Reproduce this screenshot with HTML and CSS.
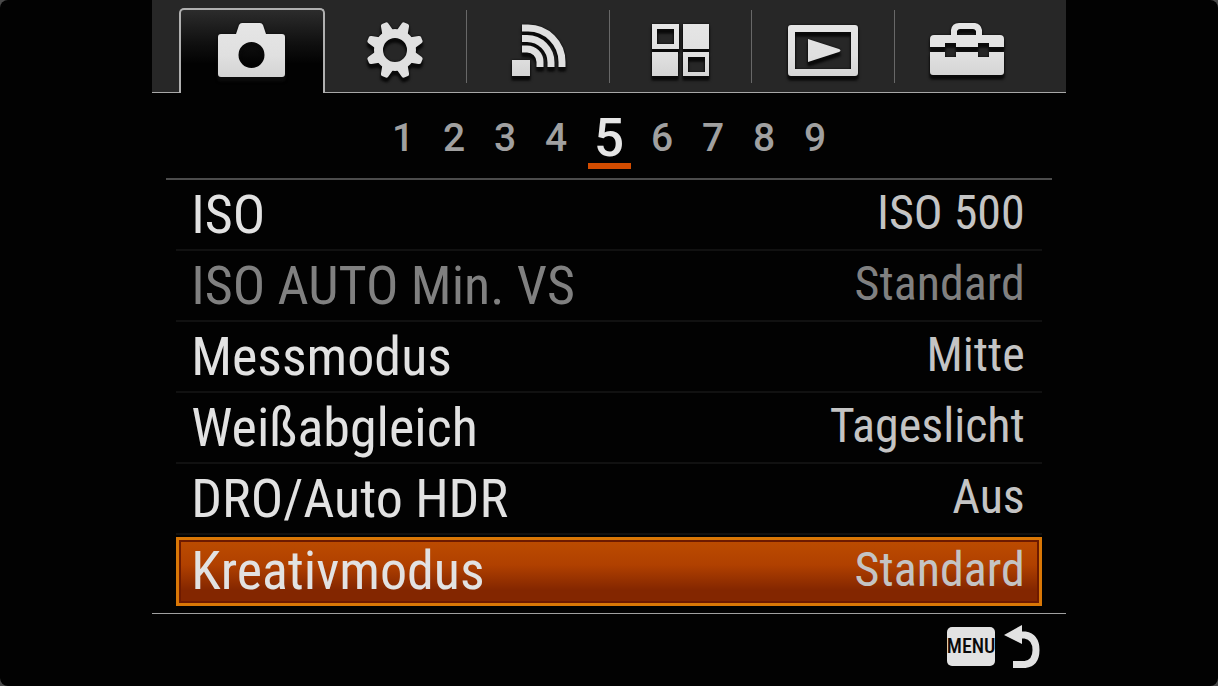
FILE: index.html
```html
<!DOCTYPE html>
<html lang="de">
<head>
  <meta charset="UTF-8">
  <meta name="viewport" content="width=device-width, initial-scale=1.0">
  <title>Kameramenü</title>
  <link rel="stylesheet" href="styles.css">
</head>
<body>
  <main class="screen">
    <nav class="tabs" aria-label="Menü">
      <button class="tab active" aria-label="Kamera">
        <svg class="icon" viewBox="0 0 80 62" fill="url(#metal)">
          <defs>
            <linearGradient id="metal" x1="0" y1="0" x2="0" y2="62" gradientUnits="userSpaceOnUse">
              <stop offset="0" stop-color="#e6e6e6"/>
              <stop offset="0.55" stop-color="#e0e0e0"/>
              <stop offset="1" stop-color="#d0d0d0"/>
            </linearGradient>
          </defs>
          <path fill-rule="evenodd" d="M9 13H24L27 4Q28 2 30 2H48Q50 2 51 4L54 13H70Q73 13 73 16V53Q73 56 70 56H9Q6 56 6 53V16Q6 13 9 13ZM39.500 21A13 13 0 1 0 39.500 47A13 13 0 1 0 39.500 21Z"/>
        </svg>
      </button>
      <button class="tab" aria-label="Benutzereinstellungen">
        <svg class="icon" viewBox="0 0 80 62" fill="#e0e0e0">
          <g transform="translate(40 29)">
            <circle r="16.500" fill="none" stroke="#e0e0e0" stroke-width="9"/>
            <path id="tooth" transform="rotate(22.500)" d="M-6 -18L-4 -27Q-3.500 -29 -2 -29H2Q3.500 -29 4 -27L6 -18Z"/>
            <use href="#tooth" transform="rotate(45)"/>
            <use href="#tooth" transform="rotate(90)"/>
            <use href="#tooth" transform="rotate(135)"/>
            <use href="#tooth" transform="rotate(180)"/>
            <use href="#tooth" transform="rotate(225)"/>
            <use href="#tooth" transform="rotate(270)"/>
            <use href="#tooth" transform="rotate(315)"/>
          </g>
        </svg>
      </button>
      <button class="tab" aria-label="Drahtlos">
        <svg class="icon" viewBox="0 0 80 62">
          <rect x="14" y="39" width="18" height="16" fill="url(#metal)"/>
          <path fill="none" stroke="#e0e0e0" stroke-width="7" d="M24 28H29A13 13 0 0 1 42 41V46M24 17.500H29A24 24 0 0 1 53 41.500V46M24 7H30A34 34 0 0 1 64 41V46"/>
        </svg>
      </button>
      <button class="tab" aria-label="Applikation">
        <svg class="icon" viewBox="0 0 80 62" fill="url(#metal)">
          <path fill-rule="evenodd" d="M12 3H39V28H12ZM17 8V23H34V8ZM43 3H69V28H43ZM12 31H38V55H12ZM43 31H69V55H43ZM48 36V51H65V36Z"/>
        </svg>
      </button>
      <button class="tab" aria-label="Wiedergabe">
        <svg class="icon" viewBox="0 0 80 62" fill="url(#metal)">
          <path fill-rule="evenodd" d="M8 4H72Q75 4 75 7V52Q75 55 72 55H8Q5 55 5 52V7Q5 4 8 4ZM12 11V48H68V11Z"/>
          <path d="M25 18L56 28Q59 29.500 56 31L25 41Z"/>
        </svg>
      </button>
      <button class="tab" aria-label="Setup">
        <svg class="icon" viewBox="0 0 80 62" fill="url(#metal)">
          <path fill-rule="evenodd" d="M8 14H25V9Q26 2 33 2H49Q55 3 56 9V14H74Q78 14 78 18V26H63V22H52V26H30V22H19V26H4V18Q4 14 8 14ZM31 14H50V10Q49 8 47 8H34Q32 8 31 10Z"/>
          <path d="M4 31H19V36H30V31H52V36H63V31H78V51Q78 54 75 54H7Q4 54 4 51Z"/>
        </svg>
      </button>
    </nav>

    <nav class="pages" aria-label="Seiten">
      <button class="page">1</button>
      <button class="page">2</button>
      <button class="page">3</button>
      <button class="page">4</button>
      <button class="page current" aria-current="page">5</button>
      <button class="page">6</button>
      <button class="page">7</button>
      <button class="page">8</button>
      <button class="page">9</button>
    </nav>

    <div class="list">
      <button class="row"><span class="name">ISO</span><span class="value">ISO 500</span></button>
      <button class="row" disabled><span class="name">ISO AUTO Min. VS</span><span class="value">Standard</span></button>
      <button class="row"><span class="name">Messmodus</span><span class="value">Mitte</span></button>
      <button class="row"><span class="name">Weißabgleich</span><span class="value">Tageslicht</span></button>
      <button class="row"><span class="name">DRO/Auto HDR</span><span class="value">Aus</span></button>
      <button class="row selected"><span class="name">Kreativmodus</span><span class="value">Standard</span></button>
    </div>

    <footer class="footer">
      <button class="menu">MENU</button>
      <button class="back" aria-label="Zurück">
        <svg class="back-icon" viewBox="0 0 36 44">
          <path fill="#e2e2e2" d="M0 10L18 0V19Z"/>
          <path fill="none" stroke="#e2e2e2" stroke-width="7" d="M16 10H21Q32 12 32 25Q32 38 21 39.500H9"/>
        </svg>
      </button>
    </footer>
  </main>
</body>
</html>
```
FILE: styles.css
```css
* {
  box-sizing: border-box;
}

html {
  background: #4a4a4a;
}

body {
  margin: 0;
  min-height: 100vh;
  border-radius: 8px;
  background: #020202;
  font-family: Roboto, "Liberation Sans", Arial, sans-serif;
  color: #e2e2e2;
}

button {
  margin: 0;
  padding: 0;
  border: 0;
  background: none;
  color: inherit;
  font: inherit;
}

.screen {
  width: 75%;
  margin: 0 auto;
}

/* top tabs */
.tabs {
  display: flex;
  height: 93px;
  padding: 8px 28px 0;
  background: #272727;
  border-bottom: 1px solid #a8a8a8;
}

.tab {
  flex: 1;
  height: 73px;
  margin-top: 2px;
  border-right: 1px solid #686868;
}

.tab:last-child {
  border-color: transparent;
}

.tab.active {
  height: 85px;
  margin: 0 -1px -1px;
  border: 2px solid #b0b0b0;
  border-bottom: 0;
  border-radius: 5px 5px 0 0;
  background: linear-gradient(#2c2c2c, #101010 40%, #020202 65%);
}

.icon {
  display: block;
  width: 80px;
  height: 62px;
  margin: 11px auto 0;
  overflow: visible;
  filter: drop-shadow(0 4px 1px #0a0a0a) drop-shadow(0 0 1px #0a0a0a);
}

.tab.active .icon {
  margin-top: 0;
}

/* page numbers */
.pages {
  display: flex;
  justify-content: center;
  align-items: flex-start;
  height: 87px;
  margin: 0 14px;
  padding-top: 20px;
  border-bottom: 2px solid #4c4c4c;
}

.page {
  width: 51px;
  font-size: 39px;
  font-weight: 500;
  line-height: 50px;
  color: #a0a0a0;
}

.page.current {
  width: 43px;
  margin: 0 6px;
  border-bottom: 6px solid #d24c00;
  font-size: 53px;
  color: #e6e6e6;
}

/* menu rows */
.list {
  margin: 0 24px;
  padding-bottom: 7px;
}

.row {
  display: flex;
  justify-content: space-between;
  width: 100%;
  height: 71px;
  padding: 0 17px 0 15px;
  border-bottom: 2px solid #111;
  font-family: "Roboto Condensed", "Liberation Sans Narrow", "Liberation Sans", sans-serif;
  white-space: nowrap;
}

.name {
  font-size: 54px;
  line-height: 70px;
}

.value {
  font-size: 48px;
  line-height: 66px;
  color: #c4c4c4;
}

.row:disabled,
.row:disabled .value {
  color: #808080;
}

.row.selected {
  height: 69px;
  margin-top: 2px;
  padding: 0 14px 0 12px;
  border: 3px solid #d97706;
  background: linear-gradient(#bd4c00, #b04000 40%, #832600 80%);
  box-shadow: inset 0 0 0 2px #6e1a00;
}

.row.selected .name {
  line-height: 62px;
}

.row.selected .value {
  line-height: 60px;
}

/* bottom bar */
.footer {
  display: flex;
  justify-content: flex-end;
  gap: 9px;
  padding: 11px 26px 0;
  border-top: 1px solid #a0a0a0;
}

.menu {
  width: 48px;
  height: 39px;
  margin-top: 2px;
  border-radius: 5px;
  background: #e2e2e2;
  color: #0a0a0a;
  font: 500 20px/39px "Roboto Condensed", "Liberation Sans Narrow", "Liberation Sans", sans-serif;
}

.back-icon {
  display: block;
  width: 36px;
  height: 44px;
}
```
